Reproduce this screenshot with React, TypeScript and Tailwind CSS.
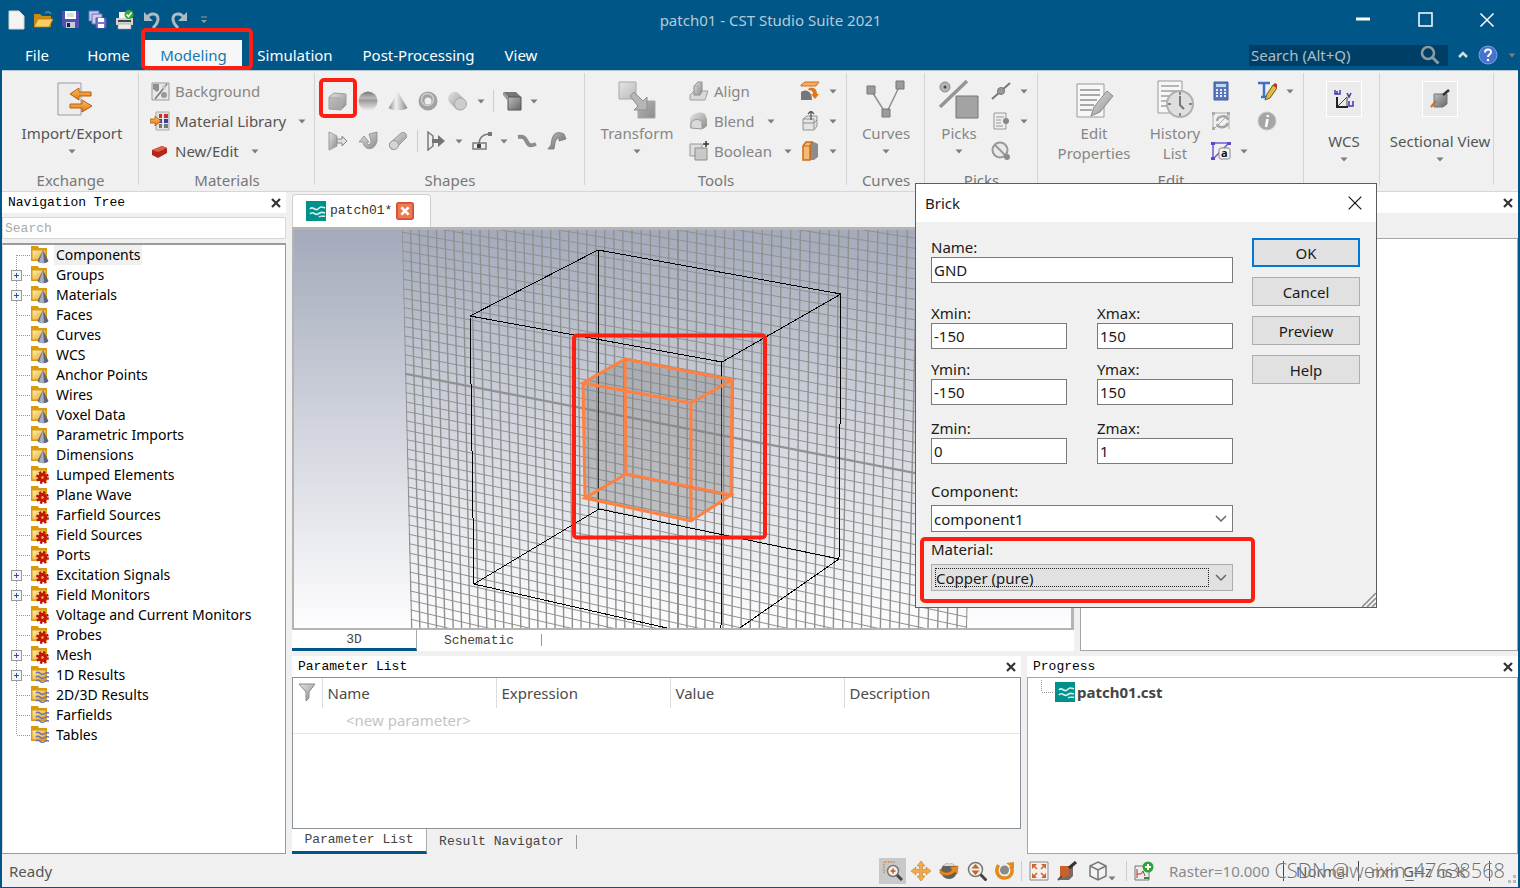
import { useState } from "react";
import type { ReactNode } from "react";

type IconProps = { size?: number; children: ReactNode; box?: number };

function Svg({ size = 20, box = 20, children }: IconProps) {
  return (
    <svg width={size} height={size} viewBox={`0 0 ${box} ${box}`} fill="none" className="shrink-0" aria-hidden="true">
      {children}
    </svg>
  );
}

function Arrow({ className = "" }: { className?: string }) {
  return (
    <svg width="8" height="5" viewBox="0 0 8 5" className={`shrink-0 ${className}`} aria-hidden="true">
      <path d="M0.5 0.5h7L4 4.5z" fill="#7c7c7c" />
    </svg>
  );
}

function Defs() {
  return (
    <svg width="0" height="0" className="absolute" aria-hidden="true">
      <defs>
        <linearGradient id="gray" x1="0" y1="0" x2="1" y2="1">
          <stop offset="0" stopColor="#e4e4e4" />
          <stop offset="1" stopColor="#8c8c8c" />
        </linearGradient>
        <linearGradient id="dark" x1="0" y1="0" x2="1" y2="1">
          <stop offset="0" stopColor="#bdbdbd" />
          <stop offset="1" stopColor="#666" />
        </linearGradient>
        <linearGradient id="cone" x1="0" y1="0" x2="1" y2="0">
          <stop offset="0" stopColor="#8c8c8c" />
          <stop offset="0.4" stopColor="#f2f2f2" />
          <stop offset="1" stopColor="#888" />
        </linearGradient>
        <linearGradient id="ball" x1="0" y1="0" x2="0" y2="1">
          <stop offset="0" stopColor="#777" />
          <stop offset="0.35" stopColor="#bbb" />
          <stop offset="0.45" stopColor="#9a9a9a" />
          <stop offset="1" stopColor="#eee" />
        </linearGradient>
        <linearGradient id="orange" x1="0" y1="0" x2="0" y2="1">
          <stop offset="0" stopColor="#fbc05a" />
          <stop offset="1" stopColor="#e07818" />
        </linearGradient>
        <linearGradient id="folder" x1="0" y1="0" x2="1" y2="1">
          <stop offset="0" stopColor="#fff0b8" />
          <stop offset="1" stopColor="#e0a010" />
        </linearGradient>
        <linearGradient id="sky" x1="0" y1="0" x2="0" y2="1">
          <stop offset="0" stopColor="#a4aabb" />
          <stop offset="0.5" stopColor="#d2d5de" />
          <stop offset="1" stopColor="#fdfdfe" />
        </linearGradient>
      </defs>
    </svg>
  );
}

/* ---------- title bar ---------- */

const quickIcons: { name: string; icon: ReactNode }[] = [
  { name: "New", icon: <path d="M2 1h10l5 5v13H2z" fill="#f4f4f2" stroke="#d5d5d0" /> },
  {
    name: "Open",
    icon: (
      <>
        <path d="M0 4h6l2 2h9v11H0z" fill="#c98b14" />
        <path d="M4 9h15l-4 8H0z" fill="#f6cf62" stroke="#b97f12" strokeWidth=".8" />
        <path d="M11 3c3-2 5-1 6 1" stroke="#5f87a5" strokeWidth="1.5" />
      </>
    ),
  },
  {
    name: "Save",
    icon: (
      <>
        <path d="M1 1h17v17H3l-2-2z" fill="#5050b4" />
        <path d="M4 1h11v8H4z" fill="#fff" />
        <path d="M6 4h7M6 6h7" stroke="#bbb" />
        <path d="M5 12h9v6H5z" fill="#c9c9dc" />
        <path d="M6 13h3v4H6z" fill="#222" />
      </>
    ),
  },
  {
    name: "Save all",
    icon: (
      <>
        <path d="M1 1h10v10H1z" fill="#c8cdea" stroke="#6a72c0" />
        <path d="M4 4h10v10H4z" fill="#c8cdea" stroke="#6a72c0" />
        <path d="M8 8h10v10H8z" fill="#7479ca" stroke="#4f54a8" />
        <path d="M10 8h6v4h-6zM10 14h6v4h-6z" fill="#fff" />
      </>
    ),
  },
  {
    name: "Print",
    icon: (
      <>
        <path d="M4 2h10v7H4z" fill="#f6f6f6" />
        <path d="M1 8h17v7H1z" fill="#d6d6d0" />
        <path d="M3 10h13v2H3z" fill="#444" />
        <path d="M3 14h13v5H3z" fill="#ececec" stroke="#999" strokeWidth=".6" />
        <circle cx="14" cy="4.500" r="4.500" fill="#35a83a" />
        <path d="M11.500 4.500l2 2 3-4" stroke="#fff" strokeWidth="1.500" />
      </>
    ),
  },
  {
    name: "Undo",
    icon: (
      <>
        <path d="M2 2v9h9z" fill="#aebbc4" />
        <path d="M5 8c3-6 11-5 11 1 0 4-2 6-5 9" stroke="#aebbc4" strokeWidth="3" />
      </>
    ),
  },
  {
    name: "Redo",
    icon: (
      <>
        <path d="M18 2v9H9z" fill="#aebbc4" />
        <path d="M15 8C12 2 4 3 4 9c0 4 2 6 5 9" stroke="#aebbc4" strokeWidth="3" />
      </>
    ),
  },
];

const tabs = [
  { label: "File", width: "w-[70px]" },
  { label: "Home", width: "w-[73px]" },
  { label: "Modeling", width: "w-[97px]" },
  { label: "Simulation", width: "w-[106px]" },
  { label: "Post-Processing", width: "w-[141px]" },
  { label: "View", width: "w-[64px]" },
];

function TitleBar() {
  const [active, setActive] = useState("Modeling");
  return (
    <header className="bg-[#005686] text-white">
      <div className="flex h-10 items-center pr-0.5">
        <div className="flex flex-1 items-center gap-[7px] pl-[7px]">
          {quickIcons.map((q) => (
            <button key={q.name} aria-label={q.name} className="h-5 w-5">
              <Svg>{q.icon}</Svg>
            </button>
          ))}
          <button aria-label="Customize quick access" className="ml-1 w-2">
            <svg width="8" height="8" viewBox="0 0 8 8" aria-hidden="true">
              <path d="M1 1h6" stroke="#9a9a94" />
              <path d="M1 4h6L4 7z" fill="#9a9a94" />
            </svg>
          </button>
        </div>
        <h1 className="pl-4 text-[#b4cbd9]">patch01 - CST Studio Suite 2021</h1>
        <div className="flex flex-1 justify-end">
          <button aria-label="Minimize" className="flex h-10 w-[62px] items-center justify-center">
            <Svg><path d="M3 9h14" stroke="#fff" strokeWidth="3" /></Svg>
          </button>
          <button aria-label="Maximize" className="flex h-10 w-[62px] items-center justify-center">
            <Svg><path d="M4 3h13v13H4z" stroke="#fff" strokeWidth="1.500" /></Svg>
          </button>
          <button aria-label="Close" className="flex h-10 w-[62px] items-center justify-center">
            <Svg><path d="M3.500 3.500l13 13M16.500 3.500l-13 13" stroke="#fff" strokeWidth="1.500" /></Svg>
          </button>
        </div>
      </div>
      <nav className="flex h-[30px] items-end pl-0.5">
        {tabs.map((t) => (
          <button
            key={t.label}
            onClick={() => setActive(t.label)}
            className={`relative h-[30px] text-center ${t.width} ${active === t.label ? "bg-[#f7f7f7] text-[#1878b0]" : "text-white"}`}
          >
            {t.label}
            {t.label === "Modeling" && (
              <span className="pointer-events-none absolute -top-3 -left-1 z-10 h-[42px] w-[112px] rounded-[5px] border-4 border-[#ff1e12]" />
            )}
          </button>
        ))}
        <div className="ml-auto flex h-[30px] items-center pr-1">
          <div className="flex h-[21px] w-[199px] items-center bg-[#003f65] pr-2">
            <input aria-label="Search" placeholder="Search (Alt+Q)" className="min-w-0 flex-1 bg-transparent pl-0.5 outline-none placeholder:text-[#a9bfcd]" />
            <Svg>
              <circle cx="8" cy="8" r="6" stroke="#8c9aa4" strokeWidth="2.500" />
              <path d="M12.500 12.500l6 6" stroke="#8c9aa4" strokeWidth="3" />
            </Svg>
          </div>
          <button aria-label="Collapse ribbon" className="ml-2.5">
            <Svg size={10} box={10}><path d="M1 7l4-4 4 4" stroke="#d5dde2" strokeWidth="2.500" /></Svg>
          </button>
          <button aria-label="Help" className="mx-2.5">
            <Svg>
              <circle cx="10" cy="10" r="9" fill="#4673cf" stroke="#7aa0e6" />
              <path d="M7 7.500c0-4 6-4 6-.5 0 2.500-3 2.500-3 5" stroke="#fff" strokeWidth="2" />
              <circle cx="10" cy="15" r="1.300" fill="#fff" />
            </Svg>
          </button>
          <Arrow />
        </div>
      </nav>
    </header>
  );
}

/* ---------- ribbon ---------- */

function Group({ label, width, children }: { label?: string; width: string; children: ReactNode }) {
  return (
    <section className={`flex shrink-0 flex-col ${width}`}>
      <div className="flex flex-1">
        <div className="flex min-w-0 flex-1">{children}</div>
        <div className="mt-0.5 -mb-4 w-px bg-[#d4d4d4]" />
      </div>
      <h2 className="h-[22px] text-center leading-[22px] text-[#777]">{label}</h2>
    </section>
  );
}

function BigButton({ icon, lines, width, dim, arrow = true }: { icon: ReactNode; lines: string[]; width: string; dim?: boolean; arrow?: boolean }) {
  return (
    <button className={`flex shrink-0 flex-col items-center pt-2 ${width} ${dim ? "text-[#868686]" : "text-[#555]"}`}>
      {icon}
      <span className="mt-1 leading-5 whitespace-nowrap">
        {lines.map((l) => (
          <span key={l} className="block">{l}</span>
        ))}
      </span>
      {arrow && <Arrow className="mt-1.5" />}
    </button>
  );
}

function RowButton({ icon, label, arrow, dim }: { icon: ReactNode; label: string; arrow?: boolean; dim?: boolean }) {
  return (
    <button className={`flex h-[30px] items-center whitespace-nowrap ${dim ? "text-[#868686]" : "text-[#555]"}`}>
      {icon}
      <span className="ml-[5px]">{label}</span>
      {arrow && <Arrow className="ml-3" />}
    </button>
  );
}

function IconButton({ name, width = "w-[30px]", children }: { name: string; width?: string; children: ReactNode }) {
  return (
    <button aria-label={name} className={`relative flex h-[30px] items-center justify-center ${width}`}>
      {children}
    </button>
  );
}

function Ribbon() {
  return (
    <div className="flex h-[122px] shrink-0 border-t border-b border-t-[#b5c5cf] border-b-[#d6d6d6] bg-[#f0f0f0]">
      <Group label="Exchange" width="w-[137px]">
        <BigButton
          width="w-[140px]"
          lines={["Import/Export"]}
          icon={
            <Svg size={40} box={40}>
              <path d="M6 4h23v32H6z" fill="#ededed" stroke="#9c9c9c" />
              <path d="M39 13H27V9l-9 6 9 6v-4h12z" fill="url(#orange)" stroke="#b45e12" />
              <path d="M18 25h12v-4l10 6-10 6v-4H18z" fill="url(#orange)" stroke="#b45e12" />
            </Svg>
          }
        />
      </Group>

      <Group label="Materials" width="w-[176px]">
        <div className="pt-[5px] pl-[11px]">
          <RowButton
            dim
            label="Background"
            icon={
              <Svg>
                <path d="M2 2h17v17H2z" fill="#e8e8e8" stroke="#999" />
                <path d="M3 3h6v6l-2 2-4-3z" fill="#8f8f8f" />
                <path d="M17 3L5 18" stroke="#777" strokeWidth="1.500" />
                <circle cx="14" cy="14" r="3" fill="#999" />
                <circle cx="14" cy="6" r="2" fill="#c5c5c5" />
              </Svg>
            }
          />
          <RowButton
            arrow
            label="Material Library"
            icon={
              <Svg>
                <path d="M6 1h13v18H6z" fill="#e2e2e2" stroke="#aaa" />
                <path d="M9 3h3v4H9zM14 3h4v4h-4z" fill="#cf2b35" />
                <path d="M9 8h3v4H9zM14 8h4v4h-4z" fill="#3b3bb0" />
                <path d="M9 13h3v4H9zM14 13h4v4h-4z" fill="#777" />
                <path d="M0 8h5V5l6 5-6 5v-3H0z" fill="url(#orange)" stroke="#b45e12" strokeWidth=".8" />
              </Svg>
            }
          />
          <RowButton
            arrow
            label="New/Edit"
            icon={
              <Svg>
                <path d="M2 9l10-4 5 2v5L8 17l-6-3z" fill="#b5261a" />
                <path d="M2 9l10-4 5 2-9 4z" fill="#d9604c" />
              </Svg>
            }
          />
        </div>
      </Group>

      <Group label="Shapes" width="w-[270px]">
        <div className="flex flex-col pt-[15px] pl-2">
          <div className="flex items-center">
            <IconButton name="Brick">
              <Svg>
                <path d="M1 6l5-4 12 1v11l-5 5-12-1z" fill="url(#gray)" stroke="#9c9c9c" />
                <path d="M1 6l12 1 5-4M13 7v12" stroke="#b5b5b5" />
                <path d="M1 6l12 1v12l-12-1z" fill="#a8a8a8" fillOpacity=".6" />
              </Svg>
              <span className="pointer-events-none absolute -top-2 -left-1 h-10 w-[38px] rounded-[5px] border-4 border-[#ff1e12]" />
            </IconButton>
            <IconButton name="Sphere"><Svg><circle cx="10" cy="10" r="9.500" fill="url(#ball)" /></Svg></IconButton>
            <IconButton name="Cone"><Svg><path d="M10 1l9.500 16c-3 3-16 3-19 0z" fill="url(#cone)" /></Svg></IconButton>
            <IconButton name="Torus"><Svg><circle cx="10" cy="10" r="6.500" stroke="#a2a2a2" strokeWidth="6" /><circle cx="9.500" cy="8.500" r="6" stroke="#cfcfcf" strokeWidth="1.500" /></Svg></IconButton>
            <IconButton name="Cylinder">
              <Svg>
                <path d="M2 3c3-3 7-3 9 0l6 6c4 6-3 13-9 9L2 12c-3-3-2-7 0-9z" fill="url(#gray)" />
                <circle cx="12.500" cy="13" r="6" fill="#cdcdcd" stroke="#aaa" />
              </Svg>
            </IconButton>
            <Arrow className="mx-1" />
            <span className="mx-1 h-[22px] w-px bg-[#ccc]" />
            <IconButton name="Face" width="w-7"><Svg><path d="M1 1h13l5 5H6z" fill="#777" /><path d="M6 6h13v13H6z" fill="url(#dark)" stroke="#555" /><path d="M1 1v3l5 6V6z" fill="#999" /></Svg></IconButton>
            <Arrow className="ml-1" />
          </div>
          <div className="mt-2.5 flex items-center">
            <IconButton name="Extrude">
              <Svg><path d="M1 1l8 4v10l-8 4z" fill="url(#gray)" stroke="#9c9c9c" /><path d="M9 8h5V5l5 5-5 5v-3H9z" fill="#dedede" stroke="#8a8a8a" /></Svg>
            </IconButton>
            <IconButton name="Rotate">
              <Svg><path d="M11 3l8-2v9c-2 10-13 10-14 1H1l5-6 5 6H9c0 4 4 3 4-1z" fill="url(#gray)" stroke="#8c8c8c" strokeWidth=".8" /></Svg>
            </IconButton>
            <IconButton name="Loft">
              <Svg><path d="M2 12L13 2c4-2 7 2 5 5L8 17c-4 4-8-1-6-5z" fill="url(#gray)" stroke="#999" /><circle cx="6" cy="14" r="4.500" fill="#d4d4d4" stroke="#999" /></Svg>
            </IconButton>
            <span className="mx-1 h-[22px] w-px bg-[#ccc]" />
            <IconButton name="Extrude curve" width="w-7">
              <Svg><path d="M2 1l5 4v10l-5 4z" stroke="#7b7b7b" strokeWidth="1.500" /><path d="M6 8h6V4l7 6-7 6v-4H6z" fill="#747474" /></Svg>
            </IconButton>
            <Arrow className="mx-[5px]" />
            <IconButton name="Trace from curve" width="w-7">
              <Svg><path d="M1 12h13v6H1z" stroke="#7b7b7b" strokeWidth="1.500" /><path d="M7 13C7 7 11 3 17 3" stroke="#7b7b7b" strokeWidth="1.500" /><path d="M5 13h4v4H5z" fill="#444" /><path d="M16 1h4v4h-4z" fill="#777" /></Svg>
            </IconButton>
            <Arrow className="mx-1" />
            <IconButton name="Bond wire"><Svg><path d="M1 6c6-1 7 1 9 5s4 4 9 2" stroke="#8c8c8c" strokeWidth="4" /></Svg></IconButton>
            <IconButton name="Sweep"><Svg><path d="M1 18h6C8 13 8 7 12 7v3l7-2-2-5C8-1 5 4 4 14z" fill="url(#dark)" stroke="#777" strokeWidth=".8" /></Svg></IconButton>
          </div>
        </div>
      </Group>

      <Group label="Tools" width="w-[262px]">
        <BigButton
          dim
          width="w-[104px]"
          lines={["Transform"]}
          icon={
            <Svg size={40} box={40}>
              <path d="M2 3h17v17H2zM21 22h17v17H21z" fill="url(#gray)" stroke="#a8a8a8" />
              <path d="M13 17l4-4 9 9 4-4v13H17l4-4z" fill="#b6b6b6" stroke="#8e8e8e" />
            </Svg>
          }
        />
        <div className="w-[106px] pt-[5px]">
          <RowButton dim label="Align" icon={<Svg><path d="M1 14l4-4h14l-3 9H1z" fill="#d8d8d8" stroke="#a0a0a0" /><path d="M5 14V5l4-4h4v9l-2 4z" fill="url(#gray)" stroke="#8c8c8c" /><path d="M5 5h4v9M9 5l4-4" stroke="#aaa" /></Svg>} />
          <RowButton dim arrow label="Blend" icon={<Svg><path d="M1 17V8c2-6 10-8 15-5l2 5v7l-4 3z" fill="url(#gray)" /><path d="M2 17v-5c3-5 9-4 11-1v7z" fill="#dadada" stroke="#999" /></Svg>} />
          <RowButton dim arrow label="Boolean" icon={<Svg><path d="M1 3h12v12H1z" fill="#ddd" stroke="#999" /><path d="M6 7h12v12H6z" fill="#c9c9c9" stroke="#8c8c8c" /><path d="M17 0v6M14 3h6" stroke="#333" strokeWidth="1.500" /></Svg>} />
        </div>
        <div className="flex shrink-0 flex-col pt-[5px]">
          <div className="flex items-center">
            <IconButton name="Bend"><Svg><path d="M1 4l4-3h14l-3 4H1z" fill="#f5ad66" stroke="#cf6c1a" /><path d="M1 19V11c6-4 11 0 11 8z" fill="#777" /><path d="M9 7c6-1 8 2 8 6h2l-4 5-4-5h2c0-3-2-4-5-4z" fill="#e07818" /></Svg></IconButton>
            <Arrow className="ml-1" />
          </div>
          <div className="flex items-center">
            <IconButton name="Shell"><Svg><path d="M3 8l4-3h10v10l-3 4H3z" fill="#e4e4e4" stroke="#909090" /><path d="M3 12h11l3-3M3 8h11v10" stroke="#909090" /><path d="M11 9V1M8 3l3-3 3 3" stroke="#555" strokeWidth="1.300" /></Svg></IconButton>
            <Arrow className="ml-1" />
          </div>
          <div className="flex items-center">
            <IconButton name="Separate"><Svg><path d="M3 5l3-4h8l4 2v13l-4 3H3z" fill="#8c8c8c" /><path d="M3 5l3-4h6l-2 4v14H3z" fill="#f6bb72" stroke="#d06a16" strokeWidth="1.500" /><path d="M3 5h7" stroke="#d06a16" /></Svg></IconButton>
            <Arrow className="ml-1" />
          </div>
        </div>
      </Group>

      <Group label="Curves" width="w-[78px]">
        <BigButton
          dim
          width="w-[78px]"
          lines={["Curves"]}
          icon={
            <Svg size={40} box={40}>
              <path d="M5 11l15 24L34 6" stroke="#8f8f8f" strokeWidth="1.500" />
              <path d="M1 7h8v8H1zM30 2h8v8h-8zM16 30h8v8h-8z" fill="#9b9b9b" stroke="#777" />
            </Svg>
          }
        />
      </Group>

      <Group label="Picks" width="w-[113px]">
        <BigButton
          dim
          width="w-[68px]"
          lines={["Picks"]}
          icon={
            <Svg size={40} box={40}>
              <circle cx="6" cy="8" r="5" fill="#b5b5b5" stroke="#888" />
              <circle cx="6" cy="8" r="1.500" fill="#444" />
              <path d="M1 28L28 2" stroke="#959595" strokeWidth="3.500" />
              <path d="M17 17h22v22H17z" fill="#a3a3a3" stroke="#757575" />
            </Svg>
          }
        />
        <div className="flex flex-col pt-[5px]">
          <div className="flex items-center">
            <IconButton name="Pick point" width="w-4"><Svg><path d="M1 18L19 2" stroke="#777" strokeWidth="2" /><circle cx="10" cy="10" r="3.500" fill="#999" stroke="#777" /></Svg></IconButton>
            <Arrow className="ml-[11px]" />
          </div>
          <div className="flex items-center">
            <IconButton name="Pick list" width="w-4"><Svg><path d="M3 2h12v16H3z" fill="#eee" stroke="#999" /><path d="M5 6h8M5 9h5M5 12h5M5 15h7" stroke="#999" /><circle cx="15" cy="10" r="3" fill="#888" /></Svg></IconButton>
            <Arrow className="ml-[11px]" />
          </div>
          <IconButton name="Clear picks" width="w-4"><Svg><circle cx="9" cy="9" r="7.500" fill="#e9e9e9" stroke="#999" strokeWidth="2" /><path d="M4 4l12 12" stroke="#999" strokeWidth="2" /><circle cx="16" cy="16" r="3" fill="#8c8c8c" /></Svg></IconButton>
        </div>
      </Group>

      <Group label="Edit" width="w-[266px]">
        <BigButton
          dim
          arrow={false}
          width="w-[112px]"
          lines={["Edit", "Properties"]}
          icon={
            <Svg size={40} box={40}>
              <path d="M3 5h27v33H3z" fill="#f7f7f7" stroke="#999" />
              <path d="M6 11h20M6 16h20M6 21h17M6 26h14M6 31h12" stroke="#909090" strokeWidth="1.500" />
              <path d="M17 37l3-9 13-16 6 5-13 16z" fill="url(#gray)" stroke="#8a8a8a" />
            </Svg>
          }
        />
        <BigButton
          dim
          arrow={false}
          width="w-[50px]"
          lines={["History", "List"]}
          icon={
            <Svg size={40} box={40}>
              <path d="M3 2h24v32H3z" fill="#f7f7f7" stroke="#999" />
              <path d="M6 7h18M6 12h18M6 17h11M6 22h8M6 27h8" stroke="#a0a0a0" strokeWidth="1.500" />
              <circle cx="25" cy="25" r="13" fill="#dfdfdf" stroke="#b0b0b0" strokeWidth="2" />
              <path d="M25 17v9l4 4" stroke="#777" strokeWidth="2" />
              <path d="M25 13v3M25 34v3M13 25h3M34 25h3" stroke="#888" strokeWidth="2" />
            </Svg>
          }
        />
        <div className="ml-1.5 flex flex-col pt-[5px]">
          <IconButton name="Calculator"><Svg><path d="M3 1h14v18H3z" fill="#5876bd" stroke="#3f5ba5" /><path d="M5 3h10v3H5z" fill="#c2d6f5" /><path d="M5 9h2M9 9h2M13 9h2M5 12h2M9 12h2M13 12h2M5 15h2M9 15h2M13 15h2" stroke="#e6ecfa" strokeWidth="2" /></Svg></IconButton>
          <IconButton name="Update"><Svg><path d="M2 2h15M2 2v16M18 3L3 18M18 3v15" stroke="#aaa" /><path d="M1 1h3v3H1zM16 1h3v3h-3zM1 16h3v3H1z" fill="#aaa" /><path d="M6 10c1-6 10-6 11-1M17 12c-2 5-9 6-11 1" stroke="#a3a3a3" strokeWidth="2.500" /></Svg></IconButton>
          <div className="flex items-center">
            <IconButton name="Parameters"><Svg><path d="M2 2h16M2 2v16M18 2L2 18" stroke="#6f59d0" strokeWidth="1.500" /><path d="M0 1h4v3H0zM16 1h4v3h-4zM0 16h4v3H0z" fill="#5b48c4" /><rect x="8" y="7" width="11" height="11" rx="2" fill="#f3f3f3" stroke="#888" /><text x="10" y="16" fontSize="11" fontWeight="700" fill="#111">a</text></Svg></IconButton>
            <Arrow className="ml-1" />
          </div>
        </div>
        <div className="ml-1 flex flex-col pt-[5px]">
          <div className="flex items-center">
            <IconButton name="Text properties"><Svg><path d="M1 2h12M7 2v14M4 16h6" stroke="#3a72cf" strokeWidth="2.500" /><path d="M8 19l2-6 6-9 4 3-7 10z" fill="#dfba42" stroke="#6c5a20" /><path d="M16 4l4 3 1-3-3-2z" fill="#c92a2a" /></Svg></IconButton>
            <Arrow className="ml-1" />
          </div>
          <IconButton name="Information"><Svg><circle cx="10" cy="10" r="9" fill="#a5a5a5" stroke="#c5c5c5" /><path d="M10.500 8l-1.500 8M11 4l-.4 2" stroke="#fff" strokeWidth="2.500" /></Svg></IconButton>
        </div>
      </Group>

      <Group width="w-[76px]">
        <BigButton
          width="w-20"
          lines={["WCS"]}
          icon={
            <span className="mt-0.5 mb-2.5 flex h-9 w-9 items-center justify-center border border-white bg-[#ebebeb]">
              <Svg>
                <path d="M3 8v10h11" stroke="#222" strokeWidth="2" />
                <path d="M4 17L13 8v9" stroke="#444" />
                <path d="M1 1v4h2V2v3h3V1M13 4l2 4 2-4M15 12v5h4v-5" stroke="#3f3ba8" strokeWidth="1.500" />
              </Svg>
            </span>
          }
        />
      </Group>

      <Group width="w-[114px]">
        <BigButton
          width="w-[120px]"
          lines={["Sectional View"]}
          icon={
            <span className="mt-0.5 mb-2.5 flex h-9 w-9 items-center justify-center border border-white bg-[#ebebeb]">
              <Svg>
                <path d="M4 5h13v10l-4 3H4z" fill="url(#dark)" stroke="#777" />
                <path d="M1 18l5-6" stroke="#cf6c2a" strokeWidth="2" />
                <path d="M13 6l6-5" stroke="#333" strokeWidth="2.500" />
              </Svg>
            </span>
          }
        />
      </Group>
    </div>
  );
}

/* ---------- docked panels ---------- */

function PanelTitle({ title, inset = "pl-1.5" }: { title?: string; inset?: string }) {
  return (
    <div className={`flex h-[21px] shrink-0 items-center bg-white pr-1 ${inset}`}>
      <h2 className="flex-1 font-['Liberation_Mono',monospace] text-[13px] text-black">{title}</h2>
      <button aria-label={`Close ${title ?? "panel"}`}>
        <Svg size={12} box={12}><path d="M2 2l8 8M10 2l-8 8" stroke="#333" strokeWidth="2.200" /></Svg>
      </button>
    </div>
  );
}

type Kind = "cone" | "gear" | "wave";

const tree: { label: string; kind: Kind; children?: boolean }[] = [
  { label: "Components", kind: "cone" },
  { label: "Groups", kind: "cone", children: true },
  { label: "Materials", kind: "cone", children: true },
  { label: "Faces", kind: "cone" },
  { label: "Curves", kind: "cone" },
  { label: "WCS", kind: "cone" },
  { label: "Anchor Points", kind: "cone" },
  { label: "Wires", kind: "cone" },
  { label: "Voxel Data", kind: "cone" },
  { label: "Parametric Imports", kind: "cone" },
  { label: "Dimensions", kind: "cone" },
  { label: "Lumped Elements", kind: "gear" },
  { label: "Plane Wave", kind: "gear" },
  { label: "Farfield Sources", kind: "gear" },
  { label: "Field Sources", kind: "gear" },
  { label: "Ports", kind: "gear" },
  { label: "Excitation Signals", kind: "gear", children: true },
  { label: "Field Monitors", kind: "gear", children: true },
  { label: "Voltage and Current Monitors", kind: "gear" },
  { label: "Probes", kind: "gear" },
  { label: "Mesh", kind: "gear", children: true },
  { label: "1D Results", kind: "wave", children: true },
  { label: "2D/3D Results", kind: "wave" },
  { label: "Farfields", kind: "wave" },
  { label: "Tables", kind: "wave" },
];

function FolderIcon({ kind }: { kind: Kind }) {
  return (
    <Svg>
      <path d="M1 1h7l1 2h8v13H1z" fill="#d89a10" />
      <path d="M2 5h14v10H2z" fill="url(#folder)" stroke="#d89a10" />
      {kind === "cone" && (
        <>
          <path d="M13 5l5.500 11c-2 3-9 3-11 0z" fill="#5f667a" />
          <path d="M13 5l1 13c-2 0-4 0-5-1z" fill="#a9afc2" />
        </>
      )}
      {kind === "gear" && (
        <>
          <circle cx="12.500" cy="12.500" r="5.200" stroke="#b3100c" strokeWidth="2.500" strokeDasharray="2.200 1.880" />
          <circle cx="12.500" cy="12.500" r="3" stroke="#c4160f" strokeWidth="3.500" />
          <circle cx="12.500" cy="12.500" r="1" fill="#f0c020" />
        </>
      )}
      {kind === "wave" && (
        <path d="M6 8c3-3 5 3 8 1s3-1 5-1M6 12c3-3 5 3 8 1s3-1 5-1M6 16c3-3 5 3 8 1s3-1 5-1" stroke="#7070b8" strokeWidth="1.500" />
      )}
    </Svg>
  );
}

function NavigationTree() {
  const [filter, setFilter] = useState("");
  return (
    <aside className="flex w-[284px] shrink-0 flex-col">
      <PanelTitle title="Navigation Tree" />
      <input
        aria-label="Search tree"
        value={filter}
        onChange={(e) => setFilter(e.target.value)}
        placeholder="Search"
        className="mt-1 h-[22px] border border-[#d8d8d8] bg-white pl-0.5 font-['Liberation_Mono',monospace] text-[13px] outline-none placeholder:text-[#aaa]"
      />
      <ul className="mt-1 flex-1 border border-t-2 border-[#9b9b9b] border-l-[#d8d8d8] bg-white text-sm leading-5 text-black">
        {tree.map((n, i) => (
          <li key={n.label} className="flex h-5 items-center pl-[7px]">
            <svg width="20" height="20" className="shrink-0" aria-hidden="true">
              <path
                d={i === 0 ? "M6.500 10v10" : i === tree.length - 1 ? "M6.500 0v10" : "M6.500 0v20"}
                stroke="#999"
                strokeDasharray="1 1"
              />
              <path d="M7 10.500h13" stroke="#999" strokeDasharray="1 1" />
              {n.children && (
                <>
                  <rect x="1.500" y="5.500" width="10" height="10" fill="#f4f4f4" stroke="#999" />
                  <path d="M4 10.500h5M6.500 8v5" stroke="#2c4fb0" />
                </>
              )}
            </svg>
            <FolderIcon kind={n.kind} />
            <span className={`ml-1 px-0.5 ${i === 0 ? "bg-[#f0f0f0]" : ""}`}>{n.label}</span>
          </li>
        ))}
      </ul>
    </aside>
  );
}

function CstIcon() {
  return (
    <Svg>
      <path d="M0 0h20v20H0z" fill="#00918a" />
      <path d="M4 8c3-4 5 3 8 0s4-2 7-1M4 13c3-4 5 2 8 0s4-2 7-1" stroke="#d6f0ee" strokeWidth="1.600" />
      <path d="M13 16c2-2 4 0 6-1" stroke="#d6f0ee" strokeWidth="1.400" />
    </Svg>
  );
}

/* Working plane: 31 cells on either side of the origin, seen in perspective */
const CELLS = 31;
const planeX = (u: number, a: number) => 678 + (a * u) / (1 - 0.04 * u);

const columns = Array.from({ length: CELLS * 2 + 1 }, (_, i) => {
  const u = (i - CELLS) / CELLS;
  return { x1: planeX(u, 287), x2: planeX(u, 277), major: i === CELLS };
});

const rows = Array.from({ length: 56 }, (_, i) => {
  const y = 374 + (i - 27) * 9.4;
  const slope = 0.195 + (y - 374) * 0.00017;
  return { y1: y - 7 * slope, y2: y + 580 * slope, major: i === 27 };
});

function Viewport() {
  return (
    <div className="relative min-h-0 flex-1 overflow-hidden border-t-[3px] border-r-[3px] border-b-2 border-l-2 border-[#b4b4b0]">
      <svg className="absolute inset-0 h-full w-full" aria-label="3D model view">
        <rect width="100%" height="100%" fill="url(#sky)" />
        <g transform="translate(-294 -230)">
          <clipPath id="plane">
            <path d="M402 230H978L967 630H411z" />
          </clipPath>
          <g clipPath="url(#plane)" stroke="#8f918f">
            {columns.map((c) => (
              <line key={c.x1} x1={c.x1} y1="230" x2={c.x2} y2="630" strokeWidth={c.major ? 2 : 1.4} />
            ))}
            {rows.map((r) => (
              <line key={r.y1} x1="400" y1={r.y1} x2="987" y2={r.y2} strokeWidth={r.major ? 2.2 : 1} />
            ))}
          </g>
          <path
            d="M598 250L841 294 722 362 470 316zM598 250L599 509M841 294L839 559M722 362L721 632M470 316L474 584M599 509L839 559 734 632M599 509L474 584 680 631"
            stroke="#000"
            strokeWidth="1"
            shapeRendering="crispEdges"
            fill="none"
          />
          <path d="M625 359L732 380 731 495 691 521 585 498 583 383z" fill="#808080" fillOpacity=".38" />
          <path
            d="M625 359L732 380 691 403 583 383zM626 474L731 495 691 521 585 498zM625 359L626 474M732 380L731 495M691 403V521M583 383L585 498"
            stroke="#ff8040"
            strokeWidth="3"
            fill="none"
          />
          <rect x="574" y="335.500" width="191" height="202" rx="3" stroke="#ff1e12" strokeWidth="4" fill="none" />
        </g>
      </svg>
    </div>
  );
}

function ViewTab({ label, active, width }: { label: string; active?: boolean; width: string }) {
  return (
    <button
      className={`h-full font-['Liberation_Mono',monospace] text-[13px] text-[#444] ${width} ${active ? "border-r border-b-[3px] border-r-[#aaa] border-b-[#005686] bg-white" : ""}`}
    >
      {label}
    </button>
  );
}

function ParameterList() {
  return (
    <section className="flex min-w-0 flex-1 flex-col">
      <PanelTitle title="Parameter List" />
      <div className="flex-1 border border-[#8b9299] bg-white">
        <table className="w-full table-fixed text-left text-[#4b4b4b]">
          <thead>
            <tr className="h-[30px]">
              <th className="w-[29px] border-r border-[#dcdcdc] align-top">
                <span className="flex justify-center pt-1">
                  <Svg><path d="M2 2h16l-6 8v6l-3 3v-9z" fill="url(#gray)" stroke="#8a8a8a" /></Svg>
                </span>
              </th>
              <th className="w-[174px] border-r border-[#dcdcdc] pl-[5px] font-normal">Name</th>
              <th className="w-[174px] border-r border-[#dcdcdc] pl-[5px] font-normal">Expression</th>
              <th className="w-[174px] border-r border-[#dcdcdc] pl-[5px] font-normal">Value</th>
              <th className="pl-[5px] font-normal">Description</th>
            </tr>
          </thead>
          <tbody>
            <tr className="h-[25px] border-b border-[#e4e4e4]">
              <td />
              <td colSpan={4} className="pl-6 text-[#c4c4c4]">&lt;new parameter&gt;</td>
            </tr>
          </tbody>
        </table>
      </div>
      <div className="flex h-[25px] items-stretch">
        <ViewTab label="Parameter List" active width="w-[135px]" />
        <ViewTab label="Result Navigator" width="w-[149px]" />
        <span className="mt-1.5 h-[14px] w-px bg-[#999]" />
      </div>
    </section>
  );
}

/* ---------- brick dialog ---------- */

function Field({ label, value, gap }: { label: string; value: string; gap: string }) {
  const id = `brick-${label.toLowerCase()}`;
  return (
    <div className={`min-w-0 flex-1 ${gap}`}>
      <label htmlFor={id} className="block h-5 leading-5">{label}:</label>
      <input id={id} defaultValue={value} className="h-[26px] w-full border border-[#7a7a7a] bg-white px-0.5 outline-none" />
    </div>
  );
}

function Chevron() {
  return (
    <svg width="12" height="8" viewBox="0 0 12 8" fill="none" className="pointer-events-none absolute top-2.5 right-1.5" aria-hidden="true">
      <path d="M1 1l5 5 5-5" stroke="#666" strokeWidth="1.500" />
    </svg>
  );
}

function BrickDialog() {
  return (
    <div role="dialog" aria-labelledby="brick-title" className="absolute top-[183px] left-[915px] w-[462px] border border-[#5c5c5c] bg-[#f0f0f0] text-[#1a1a1a]">
      <div className="flex h-[38px] items-center justify-between bg-white pr-3 pl-[9px]">
        <h2 id="brick-title">Brick</h2>
        <button aria-label="Close dialog">
          <Svg size={18}><path d="M3 3l14 14M17 3L3 17" stroke="#111" strokeWidth="1.300" /></Svg>
        </button>
      </div>
      <form className="flex justify-between pt-[15px] pr-4 pb-4 pl-[15px]" onSubmit={(e) => e.preventDefault()}>
        <div className="w-[302px]">
          <Field label="Name" value="GND" gap="mt-0" />
          <div className="flex gap-[30px]">
            <Field label="Xmin" value="-150" gap="mt-5" />
            <Field label="Xmax" value="150" gap="mt-5" />
          </div>
          <div className="flex gap-[30px]">
            <Field label="Ymin" value="-150" gap="mt-2.5" />
            <Field label="Ymax" value="150" gap="mt-2.5" />
          </div>
          <div className="flex gap-[30px]">
            <Field label="Zmin" value="0" gap="mt-[13px]" />
            <Field label="Zmax" value="1" gap="mt-[13px]" />
          </div>
          <label htmlFor="brick-component" className="mt-[15px] block h-6 leading-6">Component:</label>
          <div className="relative mt-0.5">
            <select id="brick-component" className="h-[27px] w-full appearance-none border border-[#7a7a7a] bg-white px-0.5 outline-none">
              <option>component1</option>
            </select>
            <Chevron />
          </div>
          <label htmlFor="brick-material" className="mt-[5px] block h-6 leading-6">Material:</label>
          <div className="relative mt-[3px]">
            <select id="brick-material" className="h-[27px] w-full appearance-none border border-[#adadad] bg-[#e1e1e1] px-1 outline-none">
              <option>Copper (pure)</option>
            </select>
            <span className="pointer-events-none absolute top-1 right-6 bottom-1 left-1 border border-dotted border-[#222]" />
            <Chevron />
          </div>
        </div>
        <div className="flex w-[108px] flex-col gap-2.5 pt-px">
          <button className="h-[29px] border-2 border-[#0078d7] bg-[#e1e1e1]">OK</button>
          <button className="h-[29px] border border-[#adadad] bg-[#e1e1e1]">Cancel</button>
          <button className="h-[29px] border border-[#adadad] bg-[#e1e1e1]">Preview</button>
          <button className="h-[29px] border border-[#adadad] bg-[#e1e1e1]">Help</button>
        </div>
      </form>
      <svg width="14" height="14" className="absolute right-0 bottom-0" aria-hidden="true">
        <path d="M0 14L14 0M5 14l9-9M10 14l4-4" stroke="#8a8a8a" strokeWidth="1.500" />
      </svg>
      <span className="pointer-events-none absolute bottom-1 left-1 h-[66px] w-[335px] rounded-[5px] border-4 border-[#ff1e12]" />
    </div>
  );
}

/* ---------- status bar ---------- */

function StatusBar() {
  return (
    <footer className="relative flex h-[33px] shrink-0 items-center bg-[#f0f0f0] pl-[7px] text-[#555]">
      <span className="flex-1">Ready</span>
      <div className="flex items-center gap-[1px]">
        <button aria-label="Zoom" className="flex h-[26px] w-[27px] items-center justify-center bg-[#c9c9c9]">
          <Svg><path d="M1 12V1h11" stroke="#d06a16" strokeDasharray="1.500 1" /><circle cx="10" cy="10" r="5.500" fill="#eee" stroke="#777" strokeWidth="1.500" /><path d="M14 14l5 5" stroke="#444" strokeWidth="3" /><path d="M7.500 10h5M10 7.500v5" stroke="#c45a1a" strokeWidth="1.500" /></Svg>
        </button>
        <button aria-label="Pan" className="flex w-[27px] justify-center">
          <Svg><path d="M10 0l4 5h-2.500v3.500H15V6l5 4-5 4v-2.500h-3.500V15H14l-4 5-4-5h2.500v-3.500H5V14l-5-4 5-4v2.500h3.500V5H6z" fill="#efaa4c" stroke="#c98028" strokeWidth=".6" /></Svg>
        </button>
        <button aria-label="Rotate view" className="flex w-[27px] justify-center">
          <Svg><circle cx="10" cy="10" r="8" fill="#606060" /><path d="M1 8c5 6 10 3 12 1l-2-3 8-1-1 8-2-2C11 16 3 15 1 12z" fill="#e58a1e" stroke="#b05c10" strokeWidth=".6" /><path d="M4 5c3-4 9-4 12 0z" fill="#d9d9d9" /></Svg>
        </button>
        <button aria-label="Dynamic zoom" className="flex w-[27px] justify-center">
          <Svg><circle cx="8.500" cy="8.500" r="7" fill="#eee" stroke="#777" strokeWidth="1.500" /><path d="M13.500 13.500l6 6" stroke="#444" strokeWidth="3" /><path d="M8.500 3l4 4.500h-8zM8.500 14l4-4.500h-8z" fill="#c8641c" /></Svg>
        </button>
        <button aria-label="Rotate in plane" className="flex w-[27px] justify-center">
          <Svg><circle cx="9.500" cy="9" r="4.500" fill="#8a8a8a" /><path d="M3.500 4c-4 7 0 13 6 13s10-6 6-12" stroke="#e58a1e" strokeWidth="3.500" /><path d="M11 2l8-1v7z" fill="#e58a1e" /></Svg>
        </button>
        <span className="mx-0.5 h-5 w-px bg-[#ccc]" />
        <button aria-label="Fit view" className="flex w-[27px] justify-center">
          <Svg><path d="M1 1h18v18H1z" fill="#f5f1ee" stroke="#8a8a8a" /><path d="M3 3h5L3 8zM17 3h-5l5 5zM3 17h5l-5-5zM17 17h-5l5-5z" fill="#d2622a" /><path d="M4 4l4 4M16 4l-4 4M4 16l4-4M16 16l-4-4" stroke="#d2622a" strokeWidth="1.500" /></Svg>
        </button>
        <button aria-label="Cutting plane" className="flex w-[27px] justify-center">
          <Svg><path d="M3 5h13v10l-4 4H3z" fill="#7a6c64" /><path d="M3 5h9v9l-9 4z" fill="#c8622a" /><path d="M12 7l7-6" stroke="#333" strokeWidth="3" /><path d="M1 19l4-4" stroke="#555" strokeWidth="2" /></Svg>
        </button>
        <button aria-label="View direction" className="flex w-[42px] items-end justify-center">
          <Svg><path d="M10 1l8 4v10l-8 4-8-4V5zM2 5l8 4 8-4M10 9v10" fill="#f3f3f3" stroke="#777" strokeWidth="1.500" /></Svg>
          <Arrow />
        </button>
        <span className="mx-0.5 h-5 w-px bg-[#ccc]" />
        <button aria-label="Add result plot" className="flex w-[27px] justify-center">
          <Svg><path d="M1 5h14v14H1z" fill="#eee" stroke="#777" /><path d="M3 17V8M3 13h4l2-3 2 5" stroke="#b2302a" /><path d="M10 17h5" stroke="#3a8a3a" strokeWidth="2" /><circle cx="14" cy="6" r="5.500" fill="#2fa336" /><path d="M14 3v6M11 6h6" stroke="#fff" strokeWidth="2" /></Svg>
        </button>
      </div>
      <span className="ml-3 w-[115px] border-r border-[#444] leading-5 text-[#8a8a8a]">Raster=10.000</span>
      <span className="w-[75px] border-r border-[#444] pl-3 leading-5">Normal</span>
      <span className="w-[131px] border-r border-[#444] pl-3 leading-5">mm GHz ns K</span>
      <svg width="28" height="33" viewBox="0 0 28 33" aria-hidden="true">
        <path d="M23 21h3v3h-3zM18 26h3v3h-3zM23 26h3v3h-3z" fill="#bbb" />
      </svg>
      <p className="pointer-events-none absolute right-[13px] font-['Open_Sans',sans-serif] text-[20px] font-light text-[#6f6f6f] [text-shadow:0_0_2px_#fff]">CSDN @weixin_47638568</p>
    </footer>
  );
}

export default function App() {
  return (
    <div className="relative flex h-screen flex-col overflow-hidden bg-[#005686] font-['Noto_Sans',sans-serif] text-[15px] leading-5">
      <Defs />
      <TitleBar />
      <div className="mr-0.5 mb-px ml-0.5 flex min-h-0 flex-1 flex-col bg-[#f0f0f0]">
        <Ribbon />
        <main className="flex min-h-0 flex-1 gap-1.5">
          <NavigationTree />
          <div className="flex min-w-0 flex-1 flex-col">
            <div className="flex min-h-0 flex-1 gap-1.5">
              <section className="flex min-w-0 flex-1 flex-col">
                <div className="flex h-[35px] items-end">
                  <div className="flex h-[33px] w-[139px] items-center rounded-t border border-b-0 border-[#d0d0d0] bg-white pl-[13px]">
                    <CstIcon />
                    <button className="ml-1 font-['Liberation_Mono',monospace] text-[13px] text-[#333]">patch01*</button>
                    <button aria-label="Close patch01" className="ml-1">
                      <Svg size={18}><rect x="1" y="1" width="18" height="18" rx="2" fill="#ea7c52" stroke="#d84e36" strokeWidth="2" /><path d="M6 6l8 8M14 6l-8 8" stroke="#fff" strokeWidth="3" /></Svg>
                    </button>
                  </div>
                </div>
                <Viewport />
                <div className="flex h-[21px] shrink-0 bg-white">
                  <ViewTab label="3D" active width="w-[125px]" />
                  <ViewTab label="Schematic" width="w-[124px]" />
                  <span className="mt-1 h-3 w-px bg-[#999]" />
                </div>
              </section>
              <section className="flex w-[438px] shrink-0 flex-col">
                <PanelTitle />
                <div className="h-[25px]" />
                <div className="flex-1 border border-[#a5a5a5] bg-white" />
              </section>
            </div>
            <div className="mt-[5px] flex h-[198px] shrink-0 gap-1.5">
              <ParameterList />
              <section className="flex w-[491px] shrink-0 flex-col">
                <PanelTitle title="Progress" />
                <div className="flex-1 border border-[#a5a5a5] bg-white">
                  <div className="flex h-7 items-center pl-3">
                    <svg width="15" height="28" aria-hidden="true">
                      <path d="M1.500 2v12M2 14.500h11" stroke="#999" strokeDasharray="1 1" fill="none" />
                    </svg>
                    <CstIcon />
                    <span className="ml-0.5 font-bold text-[#444]">patch01.cst</span>
                  </div>
                </div>
              </section>
            </div>
          </div>
        </main>
        <StatusBar />
      </div>
      <BrickDialog />
    </div>
  );
}
